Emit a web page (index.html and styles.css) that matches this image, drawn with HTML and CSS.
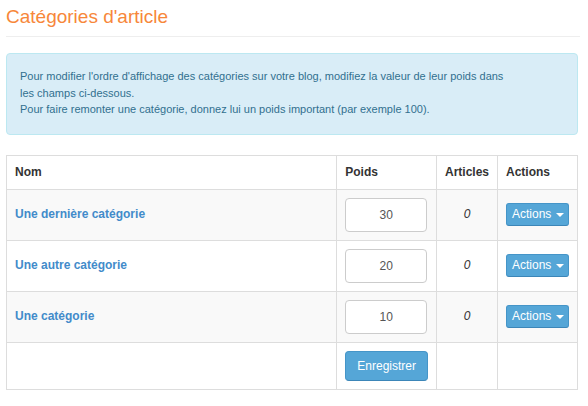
FILE: index.html
```html
<!DOCTYPE html>
<html lang="fr">
<head>
    <meta charset="UTF-8">
    <meta name="viewport" content="width=device-width, initial-scale=1.0">
    <title>Catégories d'article</title>
    <link rel="stylesheet" href="styles.css">
</head>
<body>
    <div class="container">
        <div class="page-header">
            <h1>Catégories d'article</h1>
        </div>

        <div class="alert">
            <p>Pour modifier l'ordre d'affichage des catégories sur votre blog, modifiez la valeur de leur poids dans les champs ci-dessous.</p>
            <p>Pour faire remonter une catégorie, donnez lui un poids important (par exemple 100).</p>
        </div>

        <form id="categoriesForm">
            <table class="table">
                <thead>
                    <tr>
                        <th class="col-name">Nom</th>
                        <th class="col-weight">Poids</th>
                        <th class="col-count">Articles</th>
                        <th class="col-actions">Actions</th>
                    </tr>
                </thead>
                <tbody>
                    <tr class="striped">
                        <td><a href="#">Une dernière catégorie</a></td>
                        <td><input type="text" class="weight" value="30"></td>
                        <td class="count">0</td>
                        <td><button type="button" class="btn btn-actions">Actions <span class="caret"></span></button></td>
                    </tr>
                    <tr>
                        <td><a href="#">Une autre catégorie</a></td>
                        <td><input type="text" class="weight" value="20"></td>
                        <td class="count">0</td>
                        <td><button type="button" class="btn btn-actions">Actions <span class="caret"></span></button></td>
                    </tr>
                    <tr class="striped">
                        <td><a href="#">Une catégorie</a></td>
                        <td><input type="text" class="weight" value="10"></td>
                        <td class="count">0</td>
                        <td><button type="button" class="btn btn-actions">Actions <span class="caret"></span></button></td>
                    </tr>
                    <tr>
                        <td></td>
                        <td><button type="submit" class="btn btn-save">Enregistrer</button></td>
                        <td></td>
                        <td></td>
                    </tr>
                </tbody>
            </table>
        </form>
    </div>
</body>
</html>
```

FILE: styles.css
```css
/* General styles */
body {
    margin: 0;
    font-family: "Liberation Sans", Arial, sans-serif;
    font-size: 12px;
    line-height: 17px;
    color: #333;
    background-color: #fff;
}

.container {
    width: 572px;
    margin-left: 6px;
    padding-top: 6px;
}

.page-header {
    border-bottom: 1px solid #eee;
    padding-bottom: 8px;
    margin-right: -2px;
}

.page-header h1 {
    margin: 0;
    font-size: 19px;
    font-weight: normal;
    line-height: 22px;
    color: #f7873a;
}

.alert {
    margin: 16px 0 20px;
    padding: 14px 13px 16px;
    background-color: #d9edf7;
    border: 1px solid #bce8f1;
    border-radius: 4px;
    color: #31708f;
    font-size: 11px;
    line-height: 16.5px;
}

.alert p {
    margin: 0;
    max-width: 490px;
}

/* Table */
.table {
    width: 100%;
    border-collapse: collapse;
}

.table th,
.table td {
    border: 1px solid #ddd;
    padding: 8px;
    text-align: left;
    vertical-align: middle;
}

.table th {
    font-weight: bold;
}

.col-weight {
    width: 82px;
}

.col-count {
    width: 44px;
}

.col-actions {
    width: 63px;
}

.striped td {
    background-color: #f9f9f9;
}

.table a {
    color: #428bca;
    font-weight: bold;
    text-decoration: none;
}

.count {
    text-align: center !important;
    font-style: italic;
}

input.weight {
    display: block;
    box-sizing: border-box;
    width: 82px;
    height: 34px;
    padding: 6px 8px;
    border: 1px solid #ccc;
    border-radius: 4px;
    background: #fff;
    font-family: inherit;
    font-size: 12px;
    color: #555;
    text-align: center;
}

/* Buttons */
.btn {
    display: inline-block;
    border: 1px solid #4595c8;
    border-bottom-color: #3c86b8;
    border-radius: 3px;
    background-color: #55a6d7;
    color: #fff;
    font-family: inherit;
    font-size: 12px;
    line-height: 17px;
    cursor: pointer;
}

.btn-actions {
    padding: 2px 4px 2px 5px;
}

.btn-save {
    padding: 6px 11px 5px;
    border-radius: 4px;
}

.caret {
    display: inline-block;
    width: 0;
    height: 0;
    margin-left: 1px;
    vertical-align: middle;
    border-top: 4px solid #fff;
    border-left: 4px solid transparent;
    border-right: 4px solid transparent;
}
```
